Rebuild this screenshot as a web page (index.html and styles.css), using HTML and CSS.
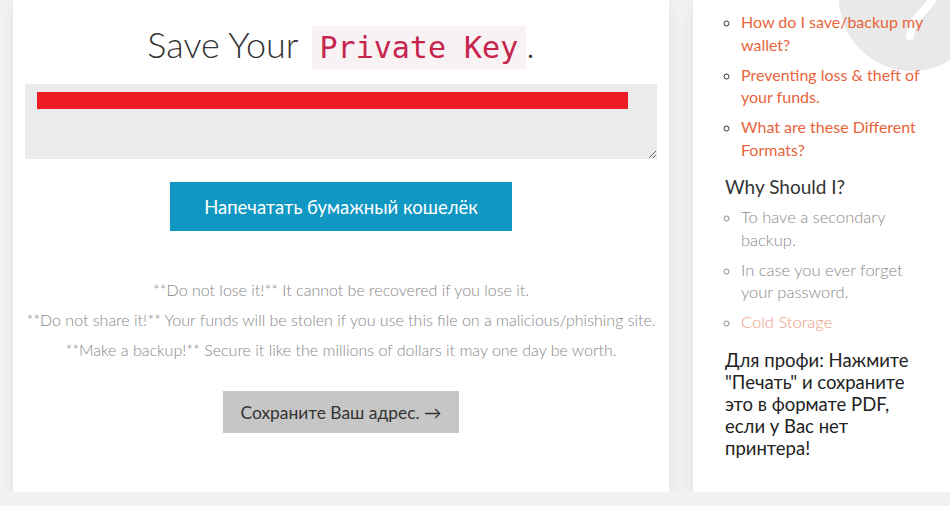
FILE: index.html
```html
<!DOCTYPE html>
<html lang="ru">
<head>
<meta charset="UTF-8">
<meta name="viewport" content="width=device-width, initial-scale=1.0">
<title>Save Your Private Key</title>
<link rel="stylesheet" href="styles.css">
</head>
<body>

<div class="page">
    <div class="main">
        <h1 class="title">Save Your <code>Private Key</code>.</h1>
        <div class="keybox">
            <textarea class="keyText" readonly></textarea>
            <span class="redact"></span>
        </div>
        <div class="center">
            <button class="btnPrint">Напечатать бумажный кошелёк</button>
        </div>
        <div class="notes">
            <p>**Do not lose it!** It cannot be recovered if you lose it.</p>
            <p>**Do not share it!** Your funds will be stolen if you use this file on a malicious/phishing site.</p>
            <p>**Make a backup!** Secure it like the millions of dollars it may one day be worth.</p>
        </div>
        <div class="center">
            <button class="btnNext">Сохраните Ваш адрес. &rarr;</button>
        </div>
    </div>

    <div class="side">
        <svg class="helpIcon" width="130" height="80" viewBox="820 0 130 80">
            <circle cx="912" cy="-2" r="73" fill="#e9e9e9"/>
            <path d="M934 -10 C934 10, 912 12, 910 36" fill="none" stroke="#fff" stroke-width="8" stroke-linecap="round"/>
        </svg>
        <ul class="links">
            <li><a href="#">How do I save/backup my wallet?</a></li>
            <li><a href="#">Preventing loss &amp; theft of your funds.</a></li>
            <li><a href="#">What are these Different Formats?</a></li>
        </ul>
        <h3>Why Should I?</h3>
        <ul class="reasons">
            <li>To have a secondary backup.</li>
            <li>In case you ever forget your password.</li>
            <li><a href="#" class="faded">Cold Storage</a></li>
        </ul>
        <p class="pro">Для профи: Нажмите "Печать" и сохраните это в формате PDF, если у Вас нет принтера!</p>
    </div>
</div>

</body>
</html>
```

FILE: styles.css
```css
body {
    font-family: Lato, "Open Sans", sans-serif;
    background-color: #f1f1f1;
    margin: 0;
    padding: 0;
    color: #333;
    overflow: hidden;
}
.page {
    display: flex;
    align-items: flex-start;
    gap: 24px;
    padding-left: 13px;
}
.main {
    flex: none;
    width: 656px;
    box-sizing: border-box;
    padding: 18px 12px 59px;
    background-color: #fff;
    box-shadow: 0 8px 14px rgba(0, 0, 0, 0.07);
}
.title {
    margin: 0 0 10px;
    text-align: center;
    font-size: 36px;
    font-weight: 300;
    line-height: 52px;
    color: #333;
}
.title code {
    font-family: "DejaVu Sans Mono", "Liberation Mono", monospace;
    font-size: 30px;
    color: #c7254e;
    background-color: #f9f2f4;
    padding: 4px 8px;
    margin-left: 4px;
}
.keybox {
    position: relative;
}
.keyText {
    display: block;
    width: 100%;
    height: 75px;
    box-sizing: border-box;
    border: none;
    background-color: #ebebeb;
    margin: 0;
    padding: 8px 12px;
}
.redact {
    position: absolute;
    left: 12px;
    top: 8px;
    width: 591px;
    height: 17px;
    background-color: #ed1c24;
}
.center {
    text-align: center;
}
button {
    font-family: Lato, "Open Sans", sans-serif;
    border: none;
    cursor: pointer;
}
.btnPrint {
    margin-top: 23px;
    width: 342px;
    height: 49px;
    background-color: #1097c2;
    color: #fff;
    font-size: 18.5px;
}
.notes {
    margin: 44px -8px 26px;
    text-align: center;
    color: #888;
    font-size: 16px;
    font-weight: 300;
    white-space: nowrap;
}
.notes p {
    margin: 0;
    line-height: 30px;
}
.btnNext {
    width: 236px;
    height: 42px;
    background-color: #c6c6c6;
    color: #333;
    font-size: 17.4px;
}
.side {
    position: relative;
    flex: 1;
    min-height: 492px;
    box-sizing: border-box;
    padding: 11px 24px 30px 32px;
    background-color: #fff;
    box-shadow: 0 8px 14px rgba(0, 0, 0, 0.07);
    font-size: 16px;
}
.helpIcon {
    position: absolute;
    right: 0;
    top: 0;
}
.side ul {
    position: relative;
    list-style: circle;
    margin: 0;
    padding-left: 16px;
}
.side li {
    line-height: 22.5px;
    margin-bottom: 7.5px;
}
.side a {
    color: #e8643b;
    text-decoration: none;
}
.side a.faded {
    color: #ec9c84;
}
.side h3 {
    margin: 14px 0 8px;
    font-size: 19px;
    font-weight: 400;
    color: #333;
}
.reasons {
    color: #888;
    font-weight: 300;
    font-size: 16.5px;
}
.pro {
    margin: 15px 0 0;
    width: 190px;
    font-size: 18.5px;
    line-height: 22px;
    color: #222;
}
```
